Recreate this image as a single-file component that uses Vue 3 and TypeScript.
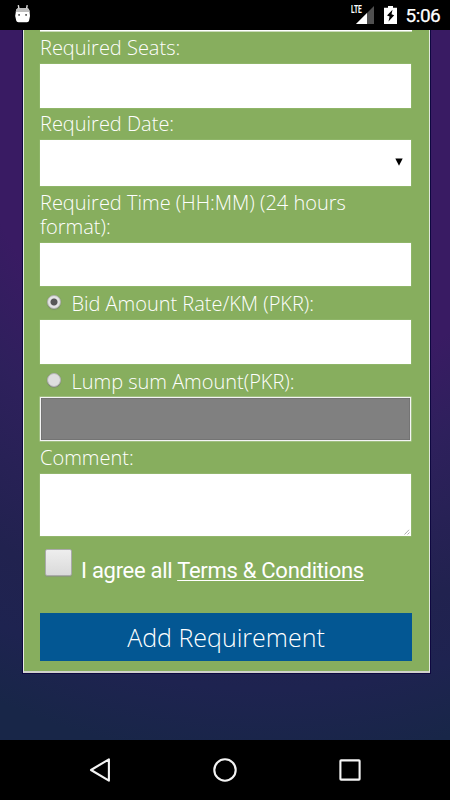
<script setup lang="ts">
import { ref } from 'vue'

type RateMode = 'rate' | 'lump'

const seats = ref('')
const time = ref('')
const rate = ref('')
const lump = ref('')
const comment = ref('')
const mode = ref<RateMode>('rate')
const agreed = ref(false)
</script>

<template>
  <div class="screen">
    <header class="status">
      <svg class="bot" width="17" height="19" viewBox="0 0 17 19">
        <path d="M4.300 1.200 5 5M13.200 1.200 12.500 5" stroke="#ddd" stroke-width="1.400" />
        <path d="M1.800 8Q2 4.600 4.300 4.300h8.800q2.300.3 2.500 3.700L16 12l-.9 4.600Q14.800 18.300 13 18.300H4.500Q2.500 18.300 2.200 16.600L1.200 12z" fill="#fff" />
        <path d="M1.800 8Q2 4.600 4.300 4.300h8.800q2.300.3 2.500 3.700z" fill="#bdbdbd" />
        <rect x="4.200" y="10" width="1.800" height="1.800" fill="#666" />
        <rect x="11.200" y="10" width="1.800" height="1.800" fill="#666" />
      </svg>
      <div class="indicators">
        <span class="lte">LTE</span>
        <svg class="signal" width="18" height="18" viewBox="0 0 18 18">
          <path d="M18 0V18H0z" fill="#505050" />
          <path d="M11 7V18H0z" fill="#fff" />
        </svg>
        <svg class="battery" width="13" height="18" viewBox="0 0 13 18">
          <path d="M4 0h5v1.700h4V18H0V1.700h4z" fill="#fff" />
          <path d="M8.500 3.800 3 9.500l2.600 1L4.500 15.500l5.700-6.300-2.700-1z" fill="#000" />
        </svg>
        <span class="clock">5:06</span>
      </div>
    </header>

    <main class="page">
      <form class="card" @submit.prevent>
        <div class="previous"></div>
        <label class="label seats" for="seats"><span>Required Seats:</span></label>
        <input id="seats" v-model="seats" class="field" />
        <label class="label date"><span>Required Date:</span></label>
        <button type="button" class="field select" aria-label="Required Date">
          <svg width="8" height="8" viewBox="0 0 8 8"><path d="M.3.500h7.400L4 7.800z" fill="#000" /></svg>
        </button>
        <label class="label time" for="time"><span>Required Time (HH:MM) (24 hours format):</span></label>
        <input id="time" v-model="time" class="field short" />
        <label class="label option bid">
          <input v-model="mode" type="radio" name="mode" value="rate" class="radio" />
          <span>Bid Amount Rate/KM (PKR):</span>
        </label>
        <input v-model="rate" class="field" />
        <label class="label option lump">
          <input v-model="mode" type="radio" name="mode" value="lump" class="radio" />
          <span>Lump sum Amount(PKR):</span>
        </label>
        <input v-model="lump" class="field disabled" :disabled="mode !== 'lump'" />
        <label class="label comment" for="comment"><span>Comment:</span></label>
        <div class="area">
          <textarea id="comment" v-model="comment"></textarea>
          <svg class="grip" width="6" height="6" viewBox="0 0 6 6">
            <path d="M.5 5.500 5 .8M3.500 5.500 5.500 3.500" stroke="#999" stroke-width=".8" />
          </svg>
        </div>
        <label class="terms">
          <input v-model="agreed" type="checkbox" class="check" />
          <span class="agree">I agree all <u>Terms &amp; Conditions</u></span>
        </label>
        <button class="submit"><span>Add Requirement</span></button>
      </form>
    </main>

    <nav class="nav">
      <svg width="26" height="26" viewBox="0 0 26 26">
        <path d="M21.900 2.300V23.700L4 13z" />
      </svg>
      <svg width="26" height="26" viewBox="0 0 26 26"><circle cx="13" cy="13" r="10.700" /></svg>
      <svg width="26" height="26" viewBox="0 0 26 26"><rect x="3.400" y="3.400" width="19.200" height="19.200" rx=".7" /></svg>
    </nav>
  </div>
</template>

<style>
body {
  margin: 0;
  background: #000;
}
</style>

<style scoped>
* {
  box-sizing: border-box;
}
.screen {
  width: 450px;
  height: 800px;
  display: flex;
  flex-direction: column;
  overflow: hidden;
  background: #000;
  font-family: "Open Sans", sans-serif;
}
.status {
  height: 30px;
  flex: none;
  display: flex;
  justify-content: space-between;
  padding: 4px 10px 0 14px;
}
.indicators {
  display: flex;
  align-items: flex-start;
  color: #fff;
  font-family: Roboto, sans-serif;
}
.lte {
  font-size: 10.5px;
  line-height: 10px;
  font-weight: 700;
  width: 11px;
  margin-top: 1px;
  transform: scaleX(0.64);
  transform-origin: left;
}
.signal {
  margin: 2px 10px 0 -6px;
}
.battery {
  margin: 2px 9px 0 0;
}
.clock {
  font-size: 19px;
  line-height: 22px;
  font-weight: 400;
  width: 34.5px;
  letter-spacing: -0.45px;
  padding-top: 1px;
  -webkit-text-stroke: 0.25px #fff;
}
.page {
  height: 710px;
  flex: none;
  padding: 0 20px 0 23px;
  background: radial-gradient(circle at 270px 60px, #391b63 0, #391b63 300px, #2e205c 385px, #21224f 530px, #1e2350 600px, #182648 670px);
}
.card {
  height: 643px;
  display: flex;
  flex-direction: column;
  padding: 0 18px 0 16px;
  background: #87ae5e;
  border: 1px solid #e4e9df;
  border-top: 0;
  border-bottom: 2px solid #cfd1cb;
  box-shadow: 0 0 0 1px #0e0840;
  clip-path: inset(0 -2px -2px -2px);
}
.previous {
  height: 1px;
  flex: none;
  background: #fff;
  margin-right: -1px;
  box-shadow: 0 1px 0 #cadbb9;
}
.label {
  flex: none;
  color: #fff;
  font-size: 20px;
  line-height: 24px;
  font-weight: 300;
}
.seats {
  height: 33px;
  padding-top: 5px;
}
.date {
  height: 32px;
  padding-top: 4px;
}
.time {
  height: 57px;
  padding-top: 5px;
}
.option {
  display: flex;
  align-items: flex-start;
  letter-spacing: -0.02px;
}
.bid {
  height: 34px;
  padding-top: 6px;
}
.lump {
  height: 33px;
  padding-top: 6px;
}
.comment {
  height: 33px;
  padding-top: 5px;
}
.field {
  display: block;
  flex: none;
  width: 100%;
  height: 44px;
  margin: 0;
  padding: 0 8px;
  border: 0;
  border-radius: 0;
  outline: none;
  background: #fff;
  box-shadow: 0 0 0 0.5px #98bb74;
  font: 300 20px "Open Sans", sans-serif;
}
.select {
  height: 46px;
  display: flex;
  align-items: center;
  justify-content: flex-end;
  padding: 0 8px 2px 0;
}
.short {
  height: 43px;
}
.disabled {
  border: 1px solid #f4f4f4;
  background: #808080;
  box-shadow: inset 0 0 0 0.5px #686868, 0 0 0 0.5px #b9cfa4;
}
.radio {
  appearance: none;
  flex: none;
  width: 14px;
  height: 14px;
  margin: 3px 10.5px 0 7px;
  border: 1px solid #b4b4b4;
  border-radius: 50%;
  background: #dedede;
  box-shadow: 0 0.5px 1px #777;
}
.radio:checked {
  background: radial-gradient(circle, #585858 0 3px, #e4e4e4 4px);
}
.area {
  position: relative;
  flex: none;
  height: 62px;
}
.area textarea {
  display: block;
  width: 100%;
  height: 62px;
  padding: 4px;
  border: 0;
  outline: none;
  resize: none;
  background: #fff;
  box-shadow: 0 0 0 0.5px #9dbd7d;
}
.grip {
  position: absolute;
  right: 1px;
  bottom: 1px;
}
.terms {
  flex: none;
  height: 77px;
  display: flex;
  align-items: flex-start;
  padding: 13px 0 0 5px;
}
.check {
  appearance: none;
  flex: none;
  width: 27px;
  height: 27px;
  margin: 0 9px 0 0;
  border: 1px solid #aaa;
  border-radius: 2px;
  background: linear-gradient(#eee, #dadada);
  box-shadow: 0 1px 1px #8a9a78;
}
.agree {
  color: #fff;
  font: 400 22px/26px Roboto, sans-serif;
  letter-spacing: -0.28px;
  padding-top: 8.5px;
  white-space: nowrap;
}
.agree u {
  text-decoration-thickness: 1px;
  text-underline-offset: 2px;
}
.submit {
  flex: none;
  width: 372px;
  height: 48px;
  margin: 0;
  padding: 0;
  border: 0;
  background: #035793;
  color: #fff;
  font: 300 25px/48px "Open Sans", sans-serif;
}
.nav {
  height: 60px;
  flex: none;
  display: flex;
  align-items: center;
  justify-content: space-between;
  padding: 0 87px;
}
.nav svg {
  fill: none;
  stroke: #f4f4f4;
  stroke-width: 2.1;
  stroke-linejoin: round;
}
</style>
